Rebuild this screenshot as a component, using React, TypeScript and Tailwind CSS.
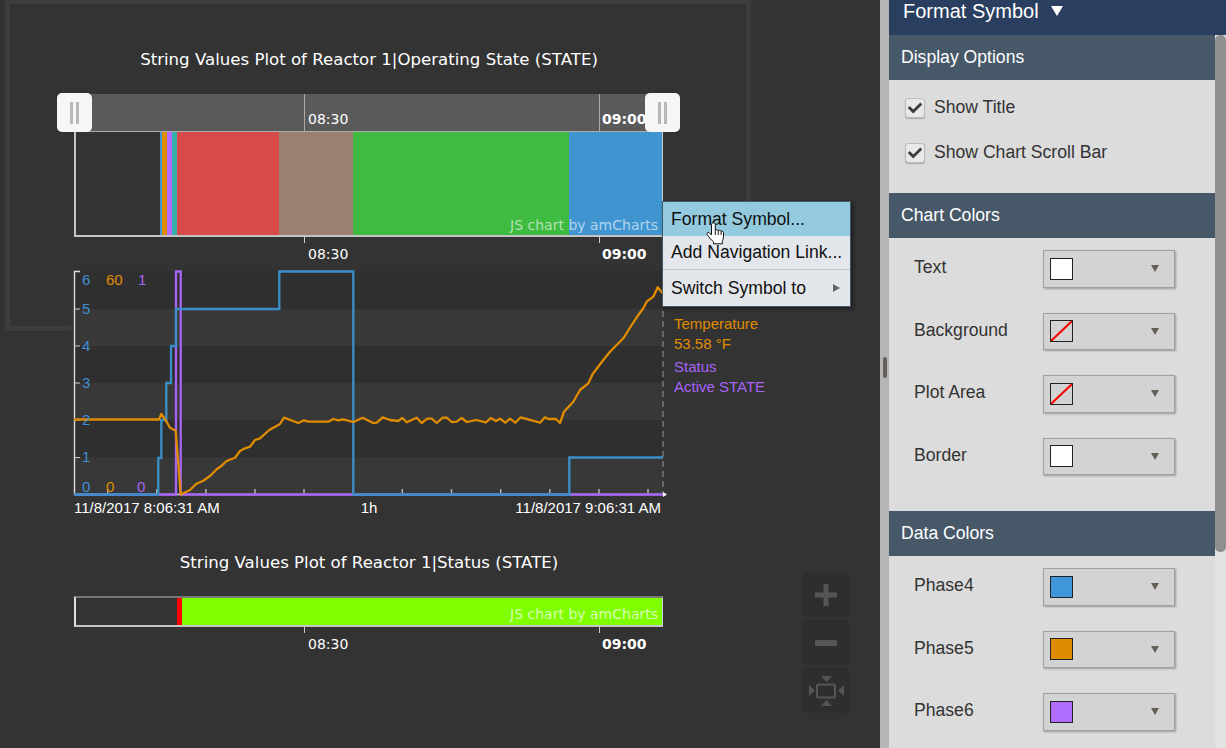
import React from 'react';
import { FaCheck } from 'react-icons/fa';

const sans = 'font-["Liberation_Sans",Arial,sans-serif]';

const orange = [
  [74, 419.5], [159, 419.5], [161.3, 414], [166, 420.7], [170, 427.7], [175.7, 430.7], [180.7, 494.5], [190, 490], [196, 484],
  [203.3, 480.7], [210, 476], [216.7, 469.3], [221.7, 465.7], [226.7, 461], [235, 457.7], [240, 451], [245, 448.3], [250, 446.7],
  [255, 440], [260, 438.3], [269.3, 430], [280, 424], [284, 417.7], [298.3, 423], [304, 420.3], [308.3, 421.7], [328.3, 421.7],
  [333.3, 419], [338.3, 420.3], [343.3, 419.3], [353.3, 422], [362.7, 417.7], [373.3, 423], [376.7, 422.7], [382.7, 417.3],
  [390, 420], [398.3, 421], [402.3, 418], [406.7, 422.3], [416.7, 417.7], [421.7, 423], [427.3, 418.7], [431.7, 418.7],
  [436.7, 423], [442.7, 417.7], [446.7, 417.7], [451.7, 422], [456.7, 421.7], [461.7, 418], [466.7, 422], [476, 420],
  [486, 422.3], [490.7, 418], [496, 421], [500, 418.7], [505.3, 422.7], [510, 418.7], [515.3, 422.7], [520.7, 417.3],
  [540, 422.7], [545, 417.3], [548.3, 419], [556, 419], [560, 423], [564, 411.7], [573.3, 401.7], [580, 390], [588.3, 383.3],
  [592.7, 374], [603.3, 360], [610, 351.7], [623.3, 338.3], [631.7, 325], [638.3, 315], [643.3, 308.3], [646.7, 301.7],
  [653.3, 296.7], [657.7, 287.3], [662.7, 293.3],
];

const xTicks = [107.7, 156.8, 205.9, 255, 304, 353.2, 402.3, 451.5, 500.7, 549.8, 599, 648];

function Swatch({ color }: { color?: string }) {
  return (
    <span className="relative w-[23px] h-[22px] border border-[#222] overflow-hidden block" style={{ backgroundColor: color }}>
      {!color && (
        <svg viewBox="0 0 23 22" className="absolute -inset-px w-[23px] h-[22px]">
          <line x1="1" y1="21" x2="22" y2="1" stroke="#f00" strokeWidth="2" />
        </svg>
      )}
    </span>
  );
}

function ColorRow({ label, color }: { label: string; color?: string }) {
  return (
    <div className="flex items-start h-[62.5px] pl-[25px]">
      <span className="w-[129px] text-[#333] text-[17.6px] leading-[20px] pt-[7px]">{label}</span>
      <div className="w-[132px] h-[37.5px] bg-[#d3d3d3] border border-[#a0a0a0] shadow-[1px_1px_2px_rgba(0,0,0,0.3)] flex items-center pl-[6px] pr-[15px] justify-between">
        <Swatch color={color} />
        <span className="w-0 h-0 border-x-[4.5px] border-x-transparent border-t-[7px] border-t-[#655f58]" />
      </div>
    </div>
  );
}

function CheckRow({ label }: { label: string }) {
  return (
    <div className="flex items-center h-[45px] pl-[16px] gap-[9px]">
      <span className="w-[20px] h-[20px] rounded-[3px] border border-[#bdbdbd] bg-[#e8e8e8] shadow-[0_1px_1px_rgba(0,0,0,0.25)] flex items-center justify-center">
        <FaCheck size={14} className="text-[#3c3c3c]" />
      </span>
      <span className="text-[#333] text-[17.6px]">{label}</span>
    </div>
  );
}

function SectionHead({ label }: { label: string }) {
  return (
    <div className="h-[45px] bg-[#475869] text-white text-[17.6px] flex items-center pl-[12px]">{label}</div>
  );
}

function AxisLabels() {
  return (
    <div className='relative h-[33px] text-white text-[14px] font-["DejaVu_Sans",sans-serif]'>
      <span className="absolute left-[229px] top-0 w-px h-[6px] bg-[#ccc]" />
      <span className="absolute left-[233px] top-[7px]">08:30</span>
      <span className="absolute left-[527px] top-[7px] font-bold">09:00</span>
      <span className="absolute left-[524px] top-0 w-px h-[6px] bg-[#ccc]" />
    </div>
  );
}

function ZoomButton({ children }: { children: React.ReactNode }) {
  return <div className="w-[46px] h-[45px] bg-[#2e2e2e] rounded-[2px] flex items-center justify-center">{children}</div>;
}

function Handle({ className }: { className: string }) {
  return (
    <div className={`absolute -top-px w-[35px] h-[39px] rounded-[5px] bg-[#f6f6f6] flex items-center justify-center gap-[3px] ${className}`}>
      <span className="w-[3px] h-[22px] bg-[#b8b8b8]" />
      <span className="w-[3px] h-[22px] bg-[#b8b8b8]" />
    </div>
  );
}

export default function App() {
  return (
    <div className={`flex w-[1226px] h-[748px] overflow-hidden ${sans}`}>
      <main className="relative w-[880px] h-full bg-[#333] shrink-0">
        <div className="absolute left-[5px] -top-px w-[746px] h-[332px] border-[5px] border-[#3d3d3d] rounded-[3px]" />

        <div className="relative pt-[50px]">
          <div className="ml-[75px] w-[588px]">
            <h2 className='h-[20px] whitespace-nowrap text-center text-white text-[16.6px] leading-[20px] font-normal font-["DejaVu_Sans",sans-serif]'>
              String Values Plot of Reactor 1|Operating State (STATE)
            </h2>

            <div className="relative mt-[24px] h-[38px] bg-[#5a5a5a] border-b border-[#aaa] text-white text-[14px]">
              <span className="absolute left-[229px] top-0 h-full w-px bg-[#aaa]" />
              <span className='absolute left-[233px] top-[15px] font-["DejaVu_Sans",sans-serif]'>08:30</span>
              <span className="absolute left-[524px] top-0 h-full w-px bg-[#aaa]" />
              <span className='absolute left-[527px] top-[15px] font-bold font-["DejaVu_Sans",sans-serif]'>09:00</span>
              <Handle className="-left-[18px]" />
              <Handle className="left-[570px]" />
            </div>

            <div className="relative -ml-px flex h-[105px] w-[589px] border-l-2 border-b-2 border-[#c4c4c4]">
              <div className="w-[84px] bg-[#333]" />
              <div className="w-[2px] bg-[#3f96d1]" />
              <div className="w-[5px] bg-[#e08c00]" />
              <div className="w-[5px] bg-[#b06cff]" />
              <div className="w-[5px] bg-[#35b0ac]" />
              <div className="w-[102px] bg-[#d64a49]" />
              <div className="w-[74px] bg-[#9b8070]" />
              <div className="w-[216px] bg-[#3ebb40]" />
              <div className="w-[94px] bg-[#4095d0] border-r border-[#ccc]" />
              <span className='absolute right-[5px] bottom-[2px] text-[14px] leading-[16px] text-white/60 font-["DejaVu_Sans",sans-serif]'>JS chart by amCharts</span>
            </div>

            <AxisLabels />
          </div>

          <section className="relative bg-[#333] ml-[71px] w-[809px]">
            <div className="flex">
              <svg viewBox="71 270 596 227" className="w-[596px] h-[227px] shrink-0">
                <rect x="74" y="271" width="589" height="224" fill="#2f2f2f" />
                <rect x="74" y="309" width="589" height="37" fill="#383838" />
                <rect x="74" y="383" width="589" height="37" fill="#383838" />
                <rect x="74" y="457.5" width="589" height="37" fill="#383838" />

                <path d="M80 271.5H74.5V494.5H665" fill="none" stroke="#ddd" strokeWidth="1.4" />
                <path d="M663 271V494" stroke="#999" strokeWidth="1" strokeDasharray="6 4" />
                <path d="M663 492l4 2.5-4 2.5z" fill="#fff" />
                {[309, 346, 383, 420, 457.5].map((y) => (
                  <line key={y} x1="74" x2="80" y1={y} y2={y} stroke="#ccc" />
                ))}
                {xTicks.map((x) => (
                  <line key={x} x1={x} x2={x} y1="489" y2="494" stroke="#bbb" strokeWidth="1.4" />
                ))}

                <path d="M74 494.5H176V271.5H180.7V494.5H663" fill="none" stroke="#a865f5" strokeWidth="2.3" />
                <path d="M74 494.5H158.3V458H161.3V420H166.3V383H171V346H176V309H279.3V271.5H353.3V494.5H569.3V457.5H663" fill="none" stroke="#3a8fc9" strokeWidth="2.3" />
                <polyline points={orange.map((p) => p.join(',')).join(' ')} fill="none" stroke="#e08c00" strokeWidth="2.3" strokeLinejoin="round" />

                <g fontSize="15" fontFamily="Liberation Sans, Arial, sans-serif">
                  <g fill="#3f8fd6">
                    <text x="82" y="285">6</text>
                    <text x="82" y="314">5</text>
                    <text x="82" y="351">4</text>
                    <text x="82" y="388">3</text>
                    <text x="82" y="425">2</text>
                    <text x="82" y="462">1</text>
                    <text x="82" y="492">0</text>
                  </g>
                  <g fill="#e08c00">
                    <text x="106" y="285">60</text>
                    <text x="106" y="492">0</text>
                  </g>
                  <g fill="#a865f5">
                    <text x="138" y="285">1</text>
                    <text x="137" y="492">0</text>
                  </g>
                </g>
              </svg>

              <div className="ml-[7px] pt-[44px] text-[15px] leading-[20px]">
                <div className="text-[#e08c00]">Temperature</div>
                <div className="text-[#e08c00]">53.58 °F</div>
                <div className="mt-[3px] text-[#a865f5]">Status</div>
                <div className="text-[#a865f5]">Active STATE</div>
              </div>
            </div>

            <div className="ml-[3px] mt-[2px] w-[587px] flex justify-between text-white text-[15px] leading-[18px]">
              <span>11/8/2017 8:06:31 AM</span>
              <span className="ml-[3px]">1h</span>
              <span>11/8/2017 9:06:31 AM</span>
            </div>
          </section>

          <div className="ml-[75px] w-[588px]">
            <h2 className='mt-[36px] h-[20px] whitespace-nowrap text-center text-white text-[16.6px] leading-[20px] font-normal font-["DejaVu_Sans",sans-serif]'>
              String Values Plot of Reactor 1|Status (STATE)
            </h2>
            <div className="relative mt-[23px] -ml-px flex h-[31px] w-[589px] border-l-2 border-r border-b-2 border-t-2 border-l-[#ddd] border-r-[#ccc] border-b-[#c4c4c4] border-t-[#777]">
              <div className="w-[101px]" />
              <div className="w-[5px] bg-[#f00]" />
              <div className="flex-1 bg-[#80ff00]" />
              <span className='absolute right-[4px] bottom-[3px] text-[14px] leading-[16px] text-white/70 font-["DejaVu_Sans",sans-serif]'>JS chart by amCharts</span>
            </div>
            <AxisLabels />
          </div>
        </div>

        <div className="absolute left-[803px] top-[572px] flex flex-col gap-[3px]">
          <ZoomButton>
            <svg viewBox="0 0 22 22" className="w-[22px] h-[22px]"><path d="M8.5 0h5v8.5H22v5h-8.5V22h-5v-8.5H0v-5h8.5z" fill="#555" /></svg>
          </ZoomButton>
          <ZoomButton>
            <svg viewBox="0 0 22 6" className="w-[22px] h-[6px]"><rect width="22" height="6" fill="#555" /></svg>
          </ZoomButton>
          <ZoomButton>
            <svg viewBox="0 0 36 32" className="w-[36px] h-[32px]">
              <path d="M13 1h11l-5.5 6zM13 31h11l-5.5-6zM1 10v11l6-5.5zM36 10v11l-6-5.5z" fill="#555" />
              <rect x="9" y="9.5" width="18" height="13" rx="1.5" fill="none" stroke="#555" strokeWidth="2" />
            </svg>
          </ZoomButton>
        </div>

        <div className="absolute left-[662px] top-[201px] w-[189px] h-[106px] border border-[#44586c] bg-[#e3e6ea] text-[#111] text-[17.6px] shadow-[2px_2px_4px_rgba(0,0,0,0.45)]">
          <div className="h-[34px] bg-[#93cadd] flex items-center pl-[8px]">Format Symbol...</div>
          <div className="h-[33px] flex items-center pl-[8px]">Add Navigation Link...</div>
          <div className="h-[37px] border-t border-[#c2c5c9] flex items-center justify-between pl-[8px] pr-[10px]">
            Switch Symbol to
            <span className="w-0 h-0 border-y-[4px] border-y-transparent border-l-[7px] border-l-[#666]" />
          </div>
          <svg viewBox="0 0 18 23" className="absolute left-[43px] top-[20px] w-[18px] h-[23px]">
            <path
              d="M7.5.8c1.1 0 1.8.8 1.8 1.8v5.7c.3-.8 2.8-.8 3 .4.3-.7 2.5-.6 2.8.7.4-.5 2.4-.3 2.4 1.2v4.2c0 2-.8 3-1.2 4.5v2.500H7.5v-2C6 18.500 3.200 16 1.200 12.300c-.7-1.300.9-2.600 2.100-1.500L5.500 13V2.600C5.500 1.600 6.300.8 7.500.8z"
              fill="#fff"
              stroke="#111"
              strokeWidth="1"
              strokeLinejoin="round"
            />
            <path d="M9.3 8.300v4.700M12.300 8.700v4.300M15.100 9.300v3.700" fill="none" stroke="#111" strokeWidth="1" />
          </svg>
        </div>
      </main>

      <div className="w-[9px] h-full bg-[#b5b5b5] relative shrink-0">
        <span className="absolute left-[3px] top-[357px] w-[4px] h-[21px] rounded-[2px] bg-[#655f58]" />
      </div>

      <aside className="w-[337px] h-full bg-[#dcdcdc] flex flex-col">
        <header className="h-[35px] shrink-0 bg-[#2a3f60] text-white text-[20px] flex items-center pl-[14px] pb-[13px] gap-[12px]">
          Format Symbol
          <span className="w-0 h-0 border-x-[6px] border-x-transparent border-t-[10px] border-t-white" />
        </header>
        <div className="flex flex-1 min-h-0">
          <div className="w-[326px] shrink-0">
            <SectionHead label="Display Options" />
            <div className="pt-[5px] h-[113px]">
              <CheckRow label="Show Title" />
              <CheckRow label="Show Chart Scroll Bar" />
            </div>
            <SectionHead label="Chart Colors" />
            <div className="pt-[12px] h-[273px]">
              <ColorRow label="Text" color="#fff" />
              <ColorRow label="Background" />
              <ColorRow label="Plot Area" />
              <ColorRow label="Border" color="#fff" />
            </div>
            <SectionHead label="Data Colors" />
            <div className="pt-[12px]">
              <ColorRow label="Phase4" color="#3f96d8" />
              <ColorRow label="Phase5" color="#e08c00" />
              <ColorRow label="Phase6" color="#b06cff" />
            </div>
          </div>
          <div className="flex-1 bg-[#e2e2e2]">
            <div className="h-[517px] bg-[#909090] rounded-[5px]" />
          </div>
        </div>
      </aside>
    </div>
  );
}
